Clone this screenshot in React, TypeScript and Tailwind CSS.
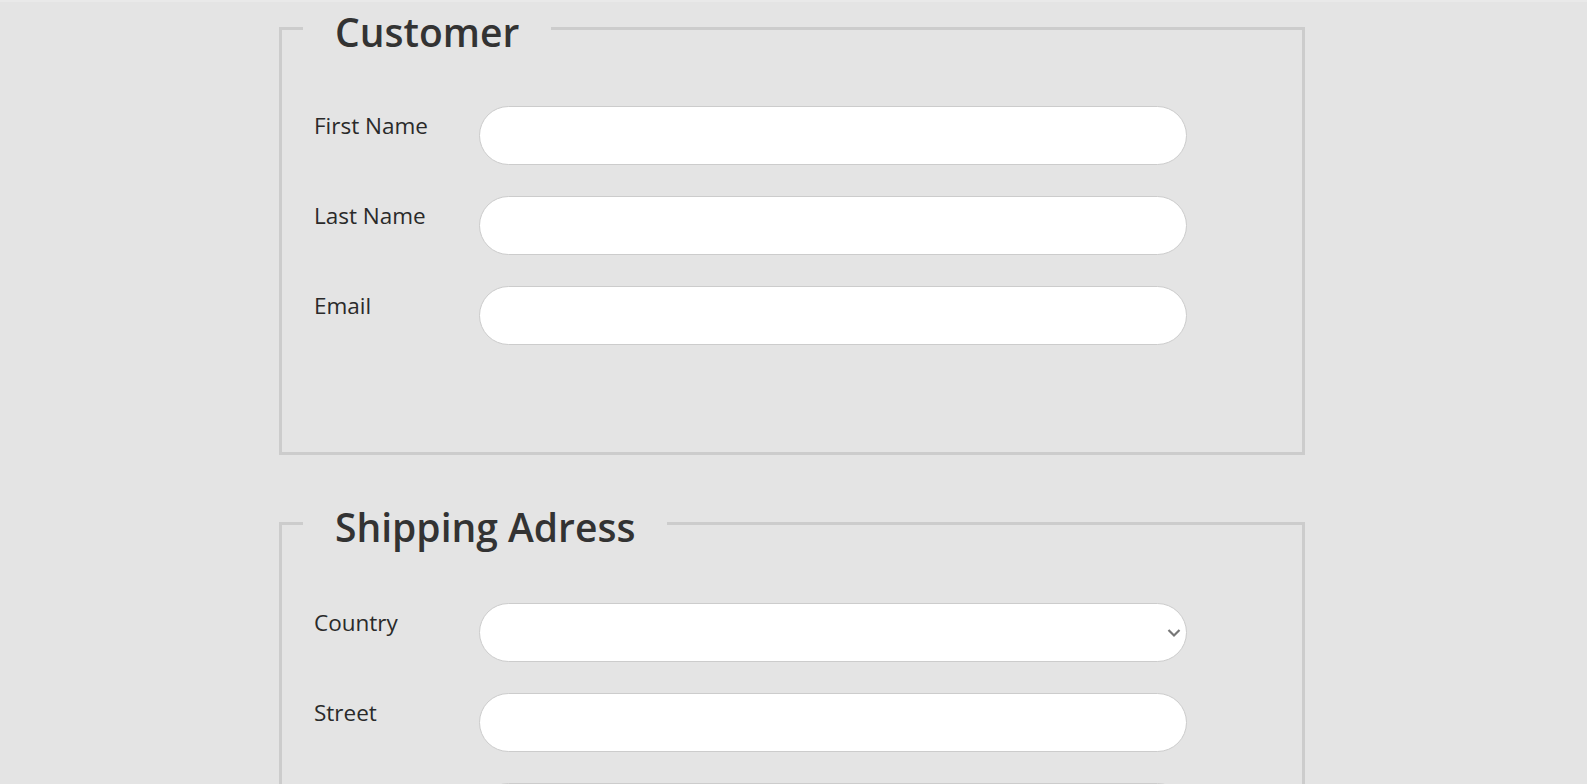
import { ChangeEvent, useState } from 'react'

type Field = { id: string; label: string; type?: 'text' | 'email' | 'select' }

const customerFields: Field[] = [
  { id: 'firstName', label: 'First Name' },
  { id: 'lastName', label: 'Last Name' },
  { id: 'email', label: 'Email', type: 'email' },
]

const shippingFields: Field[] = [
  { id: 'country', label: 'Country', type: 'select' },
  { id: 'street', label: 'Street' },
  { id: 'city', label: 'City' },
  { id: 'zip', label: 'Zip Code' },
]

function Chevron() {
  return (
    <svg width="14" height="9" viewBox="0 0 14 9" fill="none" className="pointer-events-none absolute right-[6px] top-1/2 -translate-y-1/2">
      <polyline points="1.5,1.5 7,7 12.5,1.5" stroke="#777777" strokeWidth="2.2" />
    </svg>
  )
}

function FieldRow({ field, value, onChange }: { field: Field; value: string; onChange: (v: string) => void }) {
  const base = 'w-[708px] h-[59px] rounded-full border border-[#cccccc] bg-white px-6 text-[22px] text-[#333] outline-none'
  return (
    <div className="flex items-start">
      <label htmlFor={field.id} className="w-[165px] pt-[4px] text-[22.5px] leading-8 text-[#2a2a2a]">
        {field.label}
      </label>
      {field.type === 'select' ? (
        <div className="relative">
          <select
            id={field.id}
            value={value}
            onChange={(e: ChangeEvent<HTMLSelectElement>) => onChange(e.target.value)}
            className={`${base} appearance-none`}
          >
            <option value=""></option>
            <option value="de">Germany</option>
            <option value="at">Austria</option>
            <option value="ch">Switzerland</option>
          </select>
          <Chevron />
        </div>
      ) : (
        <input
          id={field.id}
          type={field.type ?? 'text'}
          value={value}
          onChange={(e) => onChange(e.target.value)}
          className={base}
        />
      )}
    </div>
  )
}

function Section({
  title,
  fields,
  values,
  setValue,
  className,
}: {
  title: string
  fields: Field[]
  values: Record<string, string>
  setValue: (id: string, v: string) => void
  className: string
}) {
  return (
    <fieldset className={`border-[3px] border-[#cccccc] ${className}`}>
      <legend className="ml-[21px] px-8 text-[39px] leading-[52px] font-semibold text-[#333333]">
        <span className="relative top-[4px]">{title}</span>
      </legend>
      <div className="flex flex-col gap-[31px] pl-[32px]">
        {fields.map((f) => (
          <FieldRow key={f.id} field={f} value={values[f.id] ?? ''} onChange={(v) => setValue(f.id, v)} />
        ))}
      </div>
    </fieldset>
  )
}

export default function App() {
  const [values, setValues] = useState<Record<string, string>>({})
  const setValue = (id: string, v: string) => setValues((prev) => ({ ...prev, [id]: v }))

  return (
    <div
      className="min-h-screen bg-[#e4e4e4] border-t-2 border-[#e9e9e9] pb-16"
      style={{ fontFamily: '"Open Sans", "Noto Sans", sans-serif' }}
    >
      <form className="w-[1026px] ml-[279px] flex flex-col gap-[42px]" onSubmit={(e) => e.preventDefault()}>
        <Section title="Customer" fields={customerFields} values={values} setValue={setValue} className="pt-[52px] pb-[107px]" />
        <Section title="Shipping Adress" fields={shippingFields} values={values} setValue={setValue} className="pt-[54px] pb-[107px]" />
      </form>
    </div>
  )
}
